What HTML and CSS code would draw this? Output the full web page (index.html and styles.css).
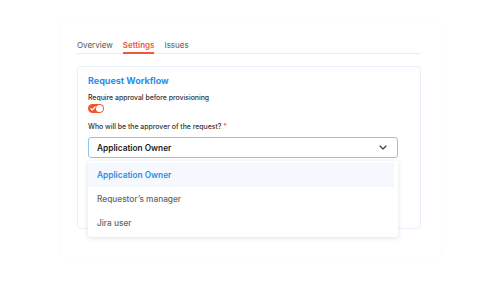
FILE: index.html
```html
<!DOCTYPE html>
<html lang="en">
<head>
    <meta charset="UTF-8">
    <meta name="viewport" content="width=device-width, initial-scale=1.0">
    <title>Settings</title>
    <link rel="stylesheet" href="styles.css">
</head>
<body>
    <div class="frame">
        <div class="tabs">
            <div class="tab">Overview</div>
            <div class="tab active">Settings</div>
            <div class="tab">Issues</div>
        </div>

        <div class="card">
            <h2 class="card-title">Request Workflow</h2>
            <div class="field-label">Require approval before provisioning</div>
            <div class="toggle">
                <svg class="toggle-check" width="6" height="5" viewBox="0 0 6 5">
                    <path d="M0.8 2.6 L2.3 4 L5.2 1" fill="none" stroke="#fff" stroke-width="1.1" stroke-linecap="round" stroke-linejoin="round"/>
                </svg>
                <span class="toggle-knob"></span>
            </div>

            <div class="field-label question">Who will be the approver of the request? <span class="required">*</span></div>
            <div class="select-wrap">
                <div class="select">
                    <span>Application Owner</span>
                    <svg width="8" height="5" viewBox="0 0 8 5">
                        <path d="M1 1 L4 4 L7 1" fill="none" stroke="#333" stroke-width="1.1" stroke-linecap="round" stroke-linejoin="round"/>
                    </svg>
                </div>
                <div class="menu">
                    <div class="option selected">Application Owner</div>
                    <div class="option">Requestor’s manager</div>
                    <div class="option">Jira user</div>
                </div>
            </div>
        </div>
    </div>
</body>
</html>
```

FILE: styles.css
```css
body {
    margin: 0;
    background: #ffffff;
    font-family: "Inter", "Noto Sans", sans-serif;
    color: #2b2b2b;
}
.frame {
    margin: 20px 58px 0 60px;
    height: 238px;
    padding: 19px 20px 0 16px;
    box-sizing: border-box;
    border: 1px solid #fcfcfd;
    border-radius: 6px;
}
.tabs {
    display: flex;
    gap: 10px;
    border-bottom: 1px solid #ececec;
}
.tab {
    font-size: 8px;
    line-height: 10px;
    color: #555;
    padding-bottom: 2px;
    border-bottom: 2px solid transparent;
    margin-bottom: -1px;
}
.tab.active {
    color: #ec5a3a;
    font-weight: 600;
    border-bottom-color: #ec5a3a;
}
.card {
    margin-top: 12px;
    height: 163px;
    box-sizing: border-box;
    border: 1px solid #eaf0fa;
    border-radius: 4px;
    padding: 9px 10px 0;
}
.card-title {
    margin: 0;
    font-size: 9px;
    line-height: 10px;
    font-weight: 700;
    color: #2b8ee6;
}
.field-label {
    margin-top: 7px;
    font-size: 6.9px;
    line-height: 9px;
    font-weight: 500;
    color: #333;
}
.toggle {
    position: relative;
    margin-top: 2px;
    width: 16px;
    height: 9px;
    border-radius: 5px;
    background: #f0552f;
}
.toggle-check {
    position: absolute;
    left: 2px;
    top: 2px;
}
.toggle-knob {
    position: absolute;
    right: 1px;
    top: 1px;
    width: 7px;
    height: 7px;
    border-radius: 50%;
    background: #fff;
}
.question {
    margin-top: 9px;
}
.required {
    color: #e8462a;
}
.select-wrap {
    position: relative;
    margin-top: 6px;
    width: 310px;
}
.select {
    display: flex;
    align-items: center;
    justify-content: space-between;
    height: 21px;
    box-sizing: border-box;
    padding: 0 10px 0 8px;
    border: 1px solid #8ec3ef;
    border-radius: 3px;
    font-size: 8.3px;
    font-weight: 600;
    color: #222;
}
.menu {
    position: absolute;
    top: 24px;
    left: 0;
    right: 0;
    background: #fff;
    border-radius: 3px;
    box-shadow: 0 1px 5px rgba(0, 0, 0, 0.12);
    padding: 2px 4px 2px 0;
}
.option {
    height: 24px;
    display: flex;
    align-items: center;
    padding-left: 9px;
    font-size: 8.3px;
    font-weight: 500;
    color: #666;
}
.option.selected {
    background: #f5f9fe;
    color: #2b8ee6;
    font-weight: 600;
}
```
